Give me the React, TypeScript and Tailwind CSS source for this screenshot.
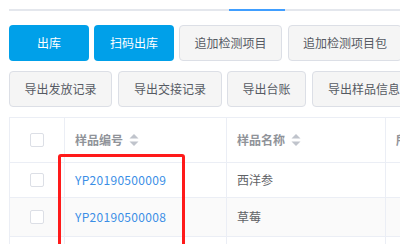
import React from "react";

const font = { fontFamily: '"Noto Sans CJK SC", "Noto Sans", sans-serif' };

function SortIcon() {
  return (
    <svg width="10" height="14" viewBox="0 0 10 14" className="ml-[6px] shrink-0">
      <path d="M5 1 L9.5 5.5 L0.5 5.5 Z" fill="#c0c4cc" />
      <path d="M5 13 L9.5 8.5 L0.5 8.5 Z" fill="#c0c4cc" />
    </svg>
  );
}

function Checkbox() {
  return <div className="w-[14px] h-[14px] border border-[#dcdfe6] rounded-[2px] bg-white" />;
}

function GrayBtn({ w, children, ml }: { w: string; children: React.ReactNode; ml: string }) {
  return (
    <div
      className={`${w} ${ml} h-[36px] shrink-0 flex items-center justify-center rounded-[4px] border border-[#dcdfe6] bg-[#f5f5f5] text-[12px] text-[#555a63] whitespace-nowrap`}
    >
      {children}
    </div>
  );
}

export default function App() {
  return (
    <div className="w-[400px] h-[244px] overflow-hidden bg-white relative" style={font}>
      <div className="pl-[9px] pt-[9px]">
        <div className="h-[2px] bg-[#e4e7ed] w-[500px] flex">
          <div className="ml-[220px] w-[56px] h-[2px] bg-[#409eff]" />
        </div>
        <div className="flex mt-[14px]">
          <div className="w-[80px] h-[36px] shrink-0 flex items-center justify-center rounded-[4px] bg-[#00a0e9] text-white text-[12px]">
            出库
          </div>
          <div className="w-[80px] h-[36px] ml-[5px] shrink-0 flex items-center justify-center rounded-[4px] bg-[#00a0e9] text-white text-[12px]">
            扫码出库
          </div>
          <GrayBtn w="w-[103px]" ml="ml-[5px]">追加检测项目</GrayBtn>
          <GrayBtn w="w-[114px]" ml="ml-[6px]">追加检测项目包</GrayBtn>
        </div>
        <div className="flex mt-[10px]">
          <GrayBtn w="w-[103px]" ml="ml-0">导出发放记录</GrayBtn>
          <GrayBtn w="w-[104px]" ml="ml-[6px]">导出交接记录</GrayBtn>
          <GrayBtn w="w-[79px]" ml="ml-[5px]">导出台账</GrayBtn>
          <GrayBtn w="w-[104px]" ml="ml-[6px]">导出样品信息</GrayBtn>
        </div>
        <div className="mt-[10px] w-[600px] border-l border-t border-[#ebeef5] text-[12px]">
          <div className="flex h-[45px] border-b border-[#ebeef5] bg-white text-[#909399] font-bold">
            <div className="w-[55px] shrink-0 border-r border-[#ebeef5] flex items-center justify-center">
              <Checkbox />
            </div>
            <div className="w-[162px] shrink-0 border-r border-[#ebeef5] flex items-center pl-[10px]">
              样品编号
              <SortIcon />
            </div>
            <div className="w-[159px] shrink-0 border-r border-[#ebeef5] flex items-center pl-[10px]">
              样品名称
              <SortIcon />
            </div>
            <div className="flex-1 flex items-center pl-[10px]">所属</div>
          </div>
          <div className="flex h-[35px] border-b border-[#ebeef5] bg-white text-[#606266]">
            <div className="w-[55px] shrink-0 border-r border-[#ebeef5] flex items-center justify-center">
              <Checkbox />
            </div>
            <div className="w-[162px] shrink-0 border-r border-[#ebeef5] flex items-center pl-[10px] text-[#3a8ee6] tracking-[0.3px]">
              YP20190500009
            </div>
            <div className="w-[159px] shrink-0 border-r border-[#ebeef5] flex items-center pl-[10px]">
              西洋参
            </div>
            <div className="flex-1" />
          </div>
          <div className="flex h-[39px] border-b border-[#ebeef5] bg-[#fafafa] text-[#606266]">
            <div className="w-[55px] shrink-0 border-r border-[#ebeef5] flex items-center justify-center">
              <Checkbox />
            </div>
            <div className="w-[162px] shrink-0 border-r border-[#ebeef5] flex items-center pl-[10px] text-[#3a8ee6] tracking-[0.3px]">
              YP20190500008
            </div>
            <div className="w-[159px] shrink-0 border-r border-[#ebeef5] flex items-center pl-[10px]">
              草莓
            </div>
            <div className="flex-1" />
          </div>
          <div className="flex h-[40px] bg-white">
            <div className="w-[55px] shrink-0 border-r border-[#ebeef5]" />
            <div className="w-[162px] shrink-0 border-r border-[#ebeef5]" />
            <div className="w-[159px] shrink-0 border-r border-[#ebeef5]" />
          </div>
        </div>
      </div>
      <div className="absolute left-[58px] top-[154px] w-[127px] h-[120px] border-[3px] border-[#ff1a1a] rounded-[3px]" />
    </div>
  );
}
